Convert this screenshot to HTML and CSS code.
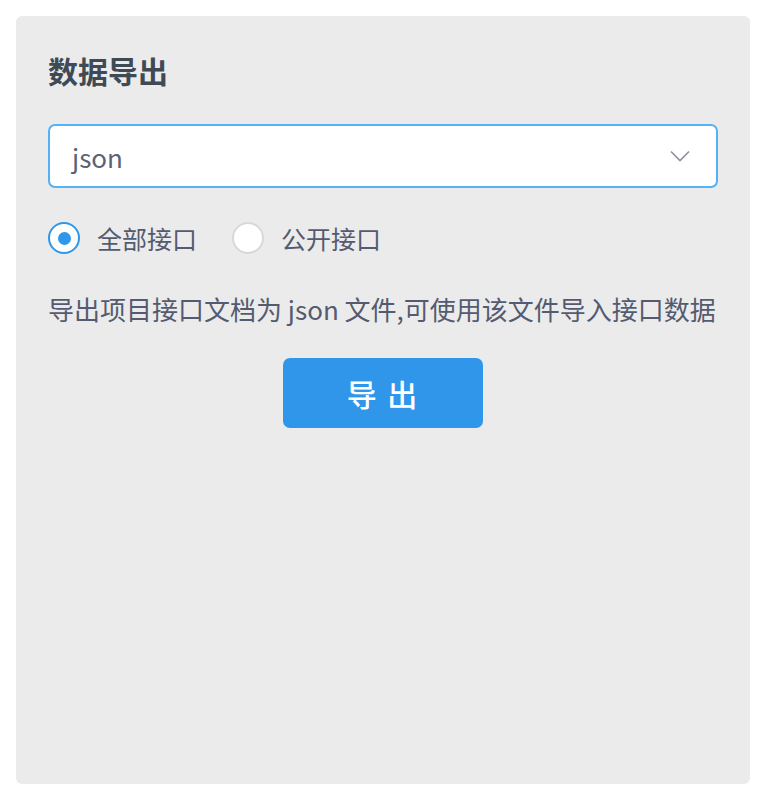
FILE: index.html
```
<!DOCTYPE html>
<html lang="zh-CN">
<head>
    <meta charset="UTF-8">
    <title>数据导出</title>
    <link rel="stylesheet" href="styles.css">
</head>
<body>

    <!-- Painel de exportação -->
    <div class="panel">
        <h2 class="panel-title">数据导出</h2>

        <!-- Seletor de formato -->
        <div class="select">
            <span class="select-value">json</span>
            <svg class="select-arrow" width="20" height="12" viewBox="0 0 20 12">
                <path d="M1 1.5 L10 10.5 L19 1.5" fill="none" stroke="#8d919b" stroke-width="1.6"/>
            </svg>
        </div>

        <!-- Escolha do escopo -->
        <div class="radio-group">
            <label class="radio checked"><span class="radio-dot"></span>全部接口</label>
            <label class="radio"><span class="radio-dot"></span>公开接口</label>
        </div>

        <p class="desc">导出项目接口文档为 json 文件,可使用该文件导入接口数据</p>

        <div class="actions">
            <button class="export-button">导 出</button>
        </div>
    </div>

</body>
</html>
```

FILE: styles.css
```
body {
    margin: 0;
    padding: 0;
    background-color: #fff;
    font-family: "Noto Sans CJK SC", "Noto Sans", sans-serif;
}

/* Painel cinza com cantos arredondados */
.panel {
    margin: 16px;
    width: 734px;
    height: 768px;
    box-sizing: border-box;
    padding: 34px 32px 0;
    background-color: #ebebeb;
    border-radius: 6px;
}

.panel-title {
    margin: 0;
    font-size: 30px;
    line-height: 40px;
    font-weight: bold;
    color: #404a55;
}

/* Campo de seleção (estado em foco) */
.select {
    margin-top: 34px;
    height: 64px;
    box-sizing: border-box;
    border: 2px solid #55b1f5;
    border-radius: 7px;
    background-color: #fff;
    display: flex;
    align-items: center;
    justify-content: space-between;
    padding: 0 26px 0 22px;
}

.select-value {
    font-size: 26px;
    color: #5a6178;
}

.select-arrow {
    display: block;
}

.radio-group {
    margin-top: 30px;
    height: 40px;
    display: flex;
    align-items: center;
    gap: 35px;
}

.radio {
    display: flex;
    align-items: center;
    gap: 17px;
    font-size: 25px;
    color: #545b70;
}

.radio-dot {
    width: 32px;
    height: 32px;
    box-sizing: border-box;
    border-radius: 50%;
    border: 2px solid #d8d8d8;
    background-color: #fff;
    display: flex;
    align-items: center;
    justify-content: center;
}

.radio.checked .radio-dot {
    border-color: #2f96ea;
}

.radio.checked .radio-dot::after {
    content: "";
    width: 13px;
    height: 13px;
    border-radius: 50%;
    background-color: #2f96ea;
}

.desc {
    margin: 33px 0 0;
    font-size: 26px;
    line-height: 36px;
    color: #545b70;
    white-space: nowrap;
}

.actions {
    margin-top: 31px;
    display: flex;
    justify-content: center;
}

.export-button {
    width: 200px;
    height: 70px;
    border: none;
    border-radius: 7px;
    background-color: #2f96ea;
    color: #fff;
    font-family: inherit;
    font-size: 30px;
    font-weight: 500;
    letter-spacing: 2px;
    cursor: pointer;
}
```
